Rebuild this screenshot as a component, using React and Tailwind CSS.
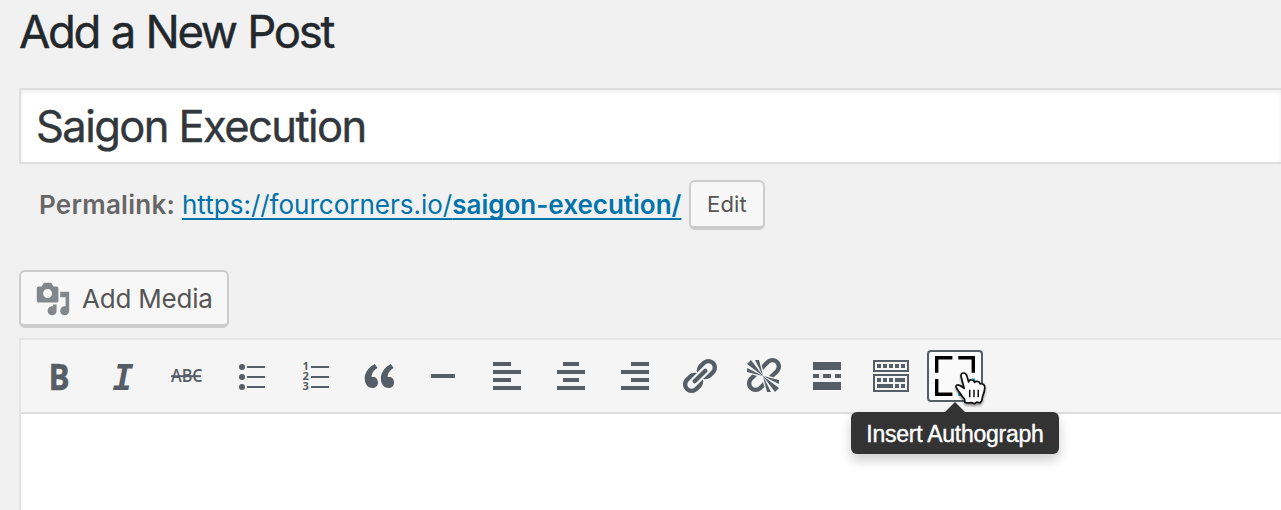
import React from "react";

const ICONS = [
  {
    name: "Bold",
    art: (
      <text x="4.8" y="17" fontFamily="Open Sans, sans-serif" fontWeight="700" fontSize="18.2" textLength="10.6" lengthAdjust="spacingAndGlyphs" stroke="#555d66" strokeWidth="0.2">B</text>
    ),
  },
  {
    name: "Italic",
    art: (
      <text x="4.7" y="17" fontFamily="DejaVu Sans Mono, monospace" fontWeight="700" fontStyle="italic" fontSize="17.8" textLength="10.6" lengthAdjust="spacingAndGlyphs">I</text>
    ),
  },
  {
    name: "Strikethrough",
    art: (
      <g>
        <text x="2" y="12.9" fontFamily="Open Sans, sans-serif" fontWeight="600" fontSize="8.6" textLength="15.8" lengthAdjust="spacingAndGlyphs">ABC</text>
        <path d="M2 9.6h15v1H2z" />
      </g>
    ),
  },
  {
    name: "Bulleted list",
    art: (
      <g>
        <circle cx="5.5" cy="5.5" r="1.5" />
        <circle cx="5.5" cy="10.5" r="1.5" />
        <circle cx="5.5" cy="15.5" r="1.5" />
        <path d="M8 5h9v1H8zM8 10h9v1H8zM8 15h9v1H8z" />
      </g>
    ),
  },
  {
    name: "Numbered list",
    art: (
      <g>
        <text fontFamily="Open Sans, sans-serif" fontWeight="700" fontSize="5.6">
          <tspan x="3.8" y="7">1</tspan>
          <tspan x="3.8" y="12">2</tspan>
          <tspan x="3.8" y="17">3</tspan>
        </text>
        <path d="M8 5h9v1H8zM8 10h9v1H8zM8 15h9v1H8z" />
      </g>
    ),
  },
  {
    name: "Blockquote",
    art: <path d="M9.49 13.22c0-.74-.2-1.38-.61-1.9-.62-.78-1.83-.88-2.53-.72-.29-1.65 1.11-3.75 2.92-4.65L7.88 4c-2.73 1.3-5.42 4.28-4.96 8.05C3.21 14.43 4.59 16 6.54 16c.85 0 1.56-.25 2.12-.75s.83-1.18.83-2.03zm8.05 0c0-.74-.2-1.38-.61-1.9-.63-.78-1.83-.88-2.53-.72-.29-1.65 1.11-3.75 2.92-4.65L15.93 4c-2.73 1.3-5.41 4.28-4.95 8.05.28 2.38 1.66 3.95 3.61 3.95.85 0 1.56-.25 2.12-.75s.83-1.18.83-2.03z" />,
  },
  { name: "Horizontal line", art: <path d="M4 9h12v2H4z" /> },
  { name: "Align left", art: <path d="M12 5V3H3v2h9zm5 4V7H3v2h14zm-5 4v-2H3v2h9zm5 4v-2H3v2h14z" /> },
  { name: "Align center", art: <path d="M14 5V3H6v2h8zm3 4V7H3v2h14zm-3 4v-2H6v2h8zm3 4v-2H3v2h14z" /> },
  { name: "Align right", art: <path d="M17 5V3H8v2h9zm0 4V7H3v2h14zm0 4v-2H8v2h9zm0 4v-2H3v2h14z" /> },
  {
    name: "Insert link",
    art: <path d="M17.74 2.76c1.68 1.69 1.68 4.41 0 6.1l-1.53 1.52c-1.12 1.12-2.7 1.47-4.14 1.09l2.62-2.61.76-.77.76-.76c.84-.84.84-2.2 0-3.04-.84-.85-2.2-.85-3.04 0l-.77.76-3.38 3.38c-.37-1.44-.02-3.02 1.1-4.14l1.52-1.53c1.69-1.68 4.42-1.68 6.1 0zM8.59 13.43l5.34-5.34c.42-.42.42-1.1 0-1.52-.44-.43-1.13-.39-1.53 0l-5.33 5.34c-.42.42-.42 1.1 0 1.52.44.43 1.13.39 1.52 0zm-.76 2.29l4.14-4.15c.38 1.44.03 3.02-1.09 4.14l-1.52 1.53c-1.69 1.68-4.41 1.68-6.1 0-1.68-1.68-1.68-4.42 0-6.1l1.53-1.52c1.12-1.12 2.7-1.47 4.14-1.1l-4.14 4.15c-.85.84-.85 2.2 0 3.05.84.84 2.2.84 3.04 0z" />,
  },
  {
    name: "Remove link",
    art: <path d="M17.74 2.26c1.68 1.69 1.68 4.41 0 6.1l-1.53 1.52c-.32.33-.69.58-1.08.77L13 10l1.69-1.64.76-.77.76-.76c.84-.84.84-2.2 0-3.04-.84-.85-2.2-.85-3.04 0l-.77.76-.76.76L10 7l-.65-2.14c.19-.38.44-.75.77-1.07l1.52-1.53c1.69-1.68 4.42-1.68 6.1 0zM2 4l8 6-6-8zm4-2l4 8-2-8H6zM2 6l8 4-8-2V6zm7.36 7.69L10 13l.74 2.35-1.38 1.39c-1.69 1.68-4.41 1.68-6.1 0-1.68-1.68-1.68-4.42 0-6.1l1.39-1.38L7 10l-.69.64-1.52 1.53c-.85.84-.85 2.2 0 3.04.84.85 2.2.85 3.04 0zM18 16l-8-6 6 8zm-4 2l-4-8 2 8h2zm4-4l-8-4 8 2v2z" />,
  },
  { name: "Read more", art: <path d="M17 7V3H3v4h14zM6 11V9H3v2h3zm6 0V9H8v2h4zm5 0V9h-3v2h3zm0 6v-4H3v4h14z" /> },
  {
    name: "Toolbar toggle",
    art: <path fillRule="evenodd" d="M19 2v6H1V2h18zm-1 5V3H2v4h16zM5 4v2H3V4h2zm3 0v2H6V4h2zm3 0v2H9V4h2zm3 0v2h-2V4h2zm3 0v2h-2V4h2zm2 5v9H1V9h18zm-1 8v-7H2v7h16zM5 11v2H3v-2h2zm3 0v2H6v-2h2zm3 0v2H9v-2h2zm6 0v2h-5v-2h5zm-6 3v2H3v-2h8zm3 0v2h-2v-2h2zm3 0v2h-2v-2h2z" />,
  },
];

function MediaIcon() {
  return (
    <svg viewBox="0 0 20 20" className="mt-px h-9 w-9 shrink-0 fill-[#82878c]">
      <path d="M13 11V4c0-.55-.45-1-1-1h-1.67L9 1H5L3.67 3H2c-.55 0-1 .45-1 1v7c0 .55.45 1 1 1h10c.55 0 1-.45 1-1zM7 4.5c1.38 0 2.5 1.12 2.5 2.5S8.38 9.5 7 9.5 4.5 8.38 4.5 7 5.62 4.5 7 4.5zM14 6h5v10.5c0 1.38-1.12 2.5-2.5 2.5S14 17.88 14 16.5s1.12-2.5 2.5-2.5c.17 0 .34.02.5.05V9h-3V6zm-4 8.05V13h2v3.5c0 1.38-1.12 2.5-2.5 2.5S7 17.88 7 16.5 8.12 14 9.5 14c.17 0 .34.02.5.05z" />
    </svg>
  );
}

function HandCursor() {
  return (
    <svg viewBox="0 0 34 36" className="absolute left-[25px] top-[17px] z-20 h-9 w-[34px] overflow-visible drop-shadow-[0_2px_1px_rgba(0,0,0,0.4)]">
      <path
        d="M10.200 19.500 7.200 8C6.500 5.400 7.800 4 9.500 4c1.800 0 2.900 1.100 3.400 3l1.700 6c.3-1.600 1.400-2.200 2.900-2 1.700.1 2.700 1 3 2.400.7-1 1.700-1.300 3-1 1.600.3 2.400 1.200 2.600 2.500 3-.6 4.800.9 4.700 3.900-.1 3.300-1.100 5.800-2.200 8.600l-.8 4.300-2 2.200-3.100-.7-2.400 1.500-3-1.100-3.200.3-3.200-.4-.3-3.400c-2.400-2.200-3.800-4.600-5.200-6.900-1.300-2-2.500-3.300-3.200-4.800-.8-1.900 1.400-3.100 3.300-2 1.800.7 3.200 1.700 4.700 3.100z"
        fill="#fff"
        stroke="#111"
        strokeWidth="1.7"
        strokeLinejoin="round"
      />
      <path d="M15.700 20.700v7.600M20 20.700v7.600M24.200 20.700v7.600" stroke="#111" strokeWidth="1.500" fill="none" />
    </svg>
  );
}

export default function App() {
  return (
    <main className="flex h-[510px] w-[1281px] flex-col overflow-hidden bg-[#f1f1f1] pl-[19px] font-['Inter',sans-serif]">
      <h1 className="h-[88px] shrink-0 pt-[3px] text-[45.5px] leading-[58px] tracking-[-2.35px] text-[#23282d] [word-spacing:1.2px] [-webkit-text-stroke:0.4px_#23282d]">Add a New Post</h1>
      <div className="flex h-[76px] shrink-0 items-center border-2 border-r-0 border-[#ddd] bg-white pt-0.5 pl-[15px] text-[43.5px] tracking-[-1.58px] text-[#32373c] shadow-[inset_0_2px_4px_rgba(0,0,0,0.07)] [-webkit-text-stroke:0.4px_#32373c]">
        <span>Saigon Execution</span>
      </div>
      <div className="mt-4 flex h-[50px] shrink-0 items-center whitespace-nowrap pl-5 text-[26px] text-[#666]">
        <strong className="w-[143px] pb-0.5 font-semibold tracking-[0.25px]">Permalink:</strong>
        <a className="w-[507px] pb-0.5 text-[#0073aa] underline decoration-2 underline-offset-[4px] [text-decoration-skip-ink:none]">
          https://fourcorners.io/<b className="font-semibold">saigon-execution/</b>
        </a>
        <button className="flex h-[50px] w-[76px] items-center justify-center rounded-md border-2 border-b-4 border-[#ccc] bg-[#f7f7f7] text-[22px] tracking-[0.2px] text-[#555]">Edit</button>
      </div>
      <button className="mt-10 flex h-[58px] w-[210px] shrink-0 items-center rounded-md border-2 border-b-4 border-[#ccc] bg-[#f7f7f7] pl-3.5 text-[26px] tracking-[-0.2px] text-[#555]">
        <MediaIcon />
        <span className="ml-[11px] whitespace-nowrap">Add Media</span>
      </button>
      <section className="mt-2.5 flex grow flex-col border-2 border-r-0 border-b-0 border-[#e5e5e5] bg-white">
        <div className="flex h-[74px] shrink-0 items-center border-b-2 border-[#ddd] bg-[#f5f5f5] pl-1.5">
          {ICONS.map(({ name, art }) => (
            <div key={name} title={name} className="flex w-16 shrink-0 justify-center">
              <svg viewBox="0 0 20 20" className="h-10 w-10 overflow-visible fill-[#555d66]">{art}</svg>
            </div>
          ))}
          <div className="relative ml-1 h-[52px] w-14 shrink-0 rounded-[4px] border-2 border-[#555d66] bg-[#fafafa] p-1">
            <svg viewBox="0 0 44 44" className="h-11 w-11" fill="none" stroke="#000" strokeWidth="3.4">
              <path d="M19.400 1.700H3.700V16.700M25.300 1.700h15v15M3.700 23v15.300H19.400" />
              <path d="M40.300 22.500v3M25.300 38.300h3" stroke="#00a0d2" />
            </svg>
            <HandCursor />
            <div className="absolute left-[-78px] top-[60px] z-10 flex h-[42px] w-[208px] items-center justify-center rounded-md bg-[#333] pt-0.5 font-['Liberation_Sans',sans-serif] text-[23px] tracking-[-0.25px] whitespace-nowrap text-white shadow-[0_6px_12px_rgba(0,0,0,0.2)] [-webkit-text-stroke:0.4px_white]">
              Insert Authograph
              <svg viewBox="0 0 20 10" className="absolute left-[94px] top-[-10px] h-2.5 w-5 fill-[#333]">
                <path d="M0 10 10 0l10 10z" />
              </svg>
            </div>
          </div>
        </div>
      </section>
    </main>
  );
}
